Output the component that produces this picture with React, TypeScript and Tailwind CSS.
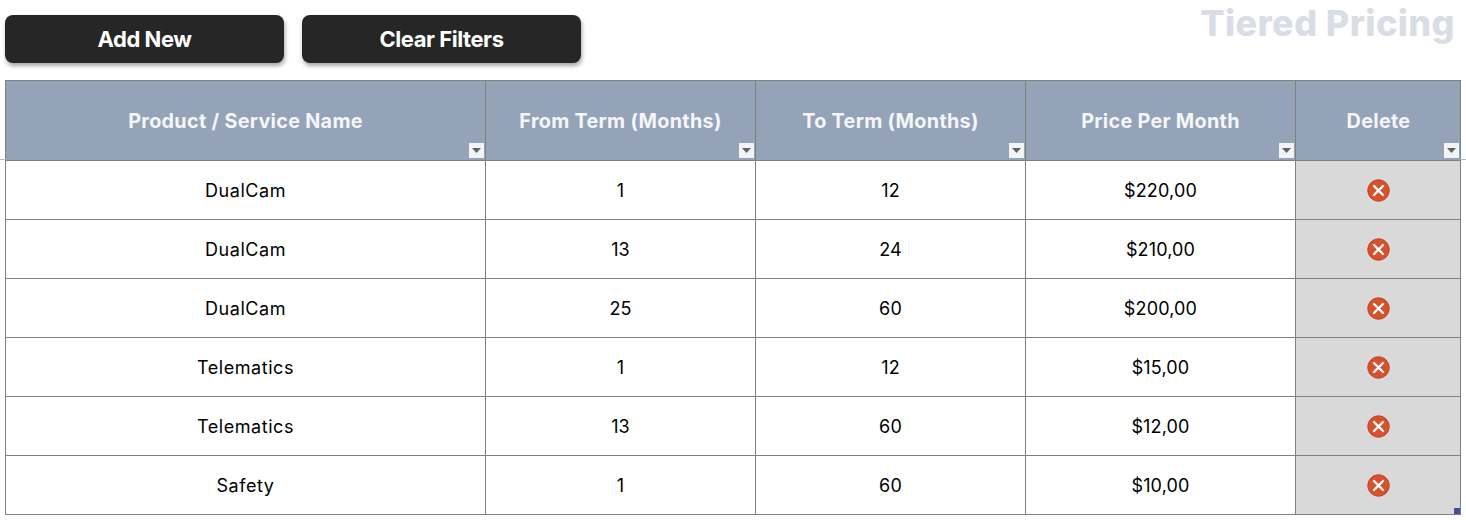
const font = { fontFamily: "Inter, 'Liberation Sans', sans-serif" };

const rows = [
  ["DualCam", "1", "12", "$220,00"],
  ["DualCam", "13", "24", "$210,00"],
  ["DualCam", "25", "60", "$200,00"],
  ["Telematics", "1", "12", "$15,00"],
  ["Telematics", "13", "60", "$12,00"],
  ["Safety", "1", "60", "$10,00"],
];

const headers = ["Product / Service Name", "From Term (Months)", "To Term (Months)", "Price Per Month", "Delete"];
const grid = "grid grid-cols-[480px_270px_270px_270px_164px]";

function FilterButton() {
  return (
    <span className="absolute right-[1px] bottom-[2px] flex h-[15px] w-[15px] items-center justify-center bg-[#f3f4f6]">
      <svg width="9" height="5" viewBox="0 0 9 5"><path d="M0 0h9L4.5 5z" fill="#5f6368" /></svg>
    </span>
  );
}

function DeleteIcon() {
  return (
    <svg width="23" height="23" viewBox="0 0 23 23">
      <circle cx="11.5" cy="11.5" r="10.75" fill="#d9512c" stroke="#bf4528" strokeWidth="1" />
      <path d="M7 7l9 9M16 7l-9 9" stroke="#fff" strokeWidth="2.4" strokeLinecap="round" />
    </svg>
  );
}

export default function App() {
  return (
    <div className="relative h-[520px] w-[1466px] overflow-hidden bg-white" style={font}>
      <div className="flex items-start justify-between pt-[5px] pr-[11px] pl-[5px]">
        <div className="flex gap-[18px] pt-[10px]">
          {["Add New", "Clear Filters"].map((label) => (
            <button
              key={label}
              className="flex h-[48px] w-[279px] items-center justify-center rounded-[8px] bg-[#262626] text-[22px] font-bold tracking-[-0.45px] text-white shadow-[1px_3px_4px_rgba(0,0,0,0.35)]"
            >
              {label}
            </button>
          ))}
        </div>
        <div className="text-[36px] leading-[36px] font-extrabold tracking-[0.4px] text-[#d9dde5]">Tiered Pricing</div>
      </div>

      <div className="mt-[17px] ml-[5px] w-[1456px] border border-[#808080]">
        <div className={`${grid} relative h-[79px] bg-[#94a3b8]`}>
          {headers.map((h, i) => (
            <div
              key={h}
              className={`relative flex items-center justify-center pt-[3px] text-[19.8px] font-bold tracking-[0.3px] text-[#f4f6f9] ${i < 4 ? "border-r border-[#808080]" : "pl-[1px]"}`}
            >
              {h}
              <FilterButton />
            </div>
          ))}
          <span className="absolute top-[78px] -left-[6px] h-px w-[6px] bg-[#b8b8b8]" />
          <span className="absolute top-[78px] -right-[6px] h-px w-[6px] bg-[#b8b8b8]" />
        </div>
        {rows.map((r, i) => (
          <div key={i} className={`${grid} h-[59px] border-t border-[#808080] text-[18px] text-black`}>
            {r.map((c, j) => (
              <div
                key={j}
                className={`flex items-center justify-center border-r border-[#808080] ${j === 0 ? "tracking-[0.55px]" : "tracking-[0.15px]"}`}
              >
                {c}
              </div>
            ))}
            <div className="relative flex items-center justify-center bg-[#d9d9d9]">
              <DeleteIcon />
              {i === 5 && <span className="absolute right-0 bottom-0 h-[6px] w-[6px] bg-[#3f51a5]" />}
            </div>
          </div>
        ))}
      </div>
    </div>
  );
}
